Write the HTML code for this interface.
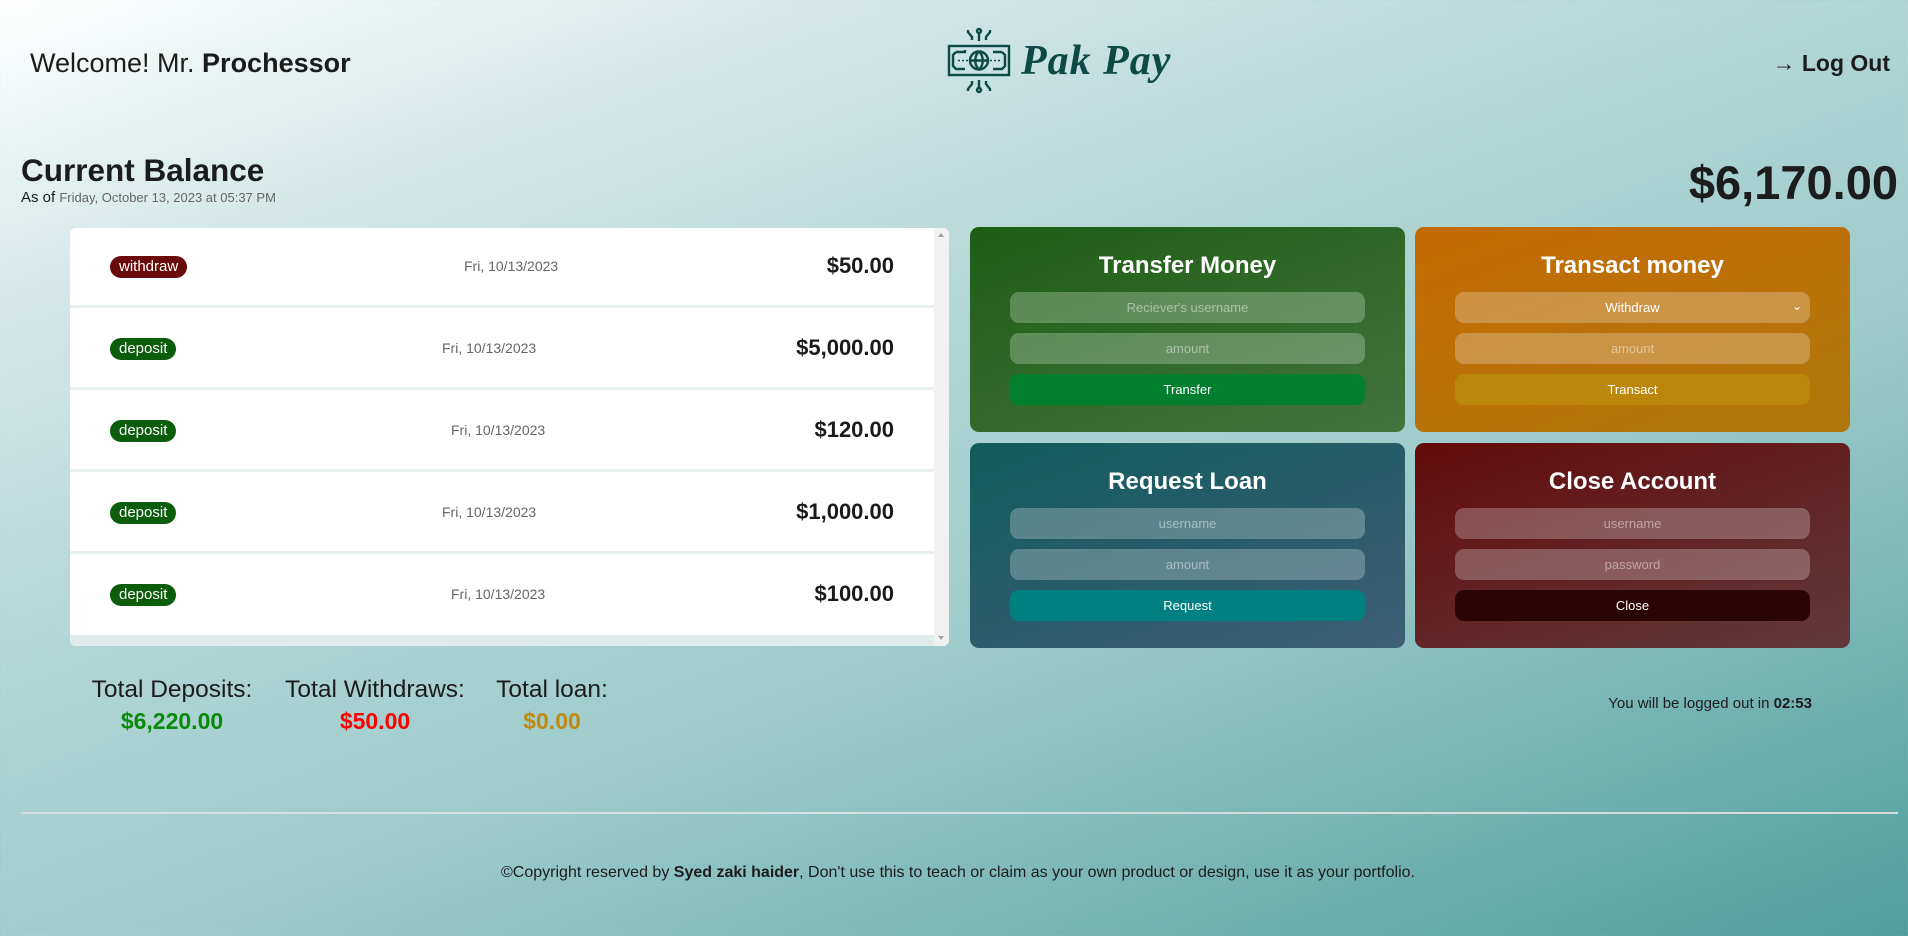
<!DOCTYPE html>
<html><head><meta charset="utf-8">
<style>
*{margin:0;padding:0;box-sizing:border-box}
html,body{width:1908px;height:936px;overflow:hidden}
body{font-family:"Liberation Sans","DejaVu Sans",sans-serif;color:#1c1c1c;position:relative;
background:linear-gradient(160deg,#ffffff 0%,#d6e9e9 18%,#b4d6d6 40%,#9ccaca 62%,#74b3b2 82%,#4e9e9e 100%);}
.a{position:absolute;white-space:nowrap}
.list{position:absolute;left:70px;top:228px;width:879px;height:418px;background:#fff;border-radius:6px;overflow:hidden}
.row{position:absolute;left:0;width:864px;height:80px;border-bottom:3px solid #e6f0f0}
.badge{position:absolute;left:40px;top:28px;height:22px;line-height:22px;padding:0 9px;border-radius:11px;color:#fff;font-size:15px;background:#0b5d0b}
.badge.w{background:#6a0a0a}
.date{position:absolute;top:30px;font-size:14px;color:#666}
.amt{position:absolute;right:40px;top:25px;font-size:22px;font-weight:bold;color:#1a1a1a}
.sb{position:absolute;right:0;top:0;width:15px;height:418px;background:#f1f1f1}
.card{position:absolute;width:435px;height:205px;border-radius:9px;color:#fff;text-align:center}
.card h2{position:absolute;left:0;right:0;top:25px;font-size:24px;font-weight:bold}
.in{position:absolute;left:40px;width:355px;height:31px;border-radius:9px;background:rgba(255,255,255,.25);font-size:13px;line-height:31px;color:rgba(255,255,255,.45)}
.btn{position:absolute;left:40px;width:355px;height:31px;border-radius:9px;font-size:13px;line-height:31px;color:#fff}
</style></head><body>
<div class="a" style="left:30px;top:48px;font-size:27px">Welcome! Mr. <b>Prochessor</b></div>

<svg class="a" style="left:946px;top:27px" width="66" height="68" viewBox="0 0 66 68" fill="none" stroke="#0d4a45" stroke-width="2.4">
<rect x="3" y="19" width="60" height="29"/>
<path d="M10 25 L19 25 L19 23 M10 25 L7 28 L7 39 L10 42 L19 42 M56 25 L47 25 M56 25 L59 28 L59 39 L56 42 L47 42"/>
<circle cx="33" cy="33.5" r="9"/>
<path d="M24 33.5 H42 M33 24.5 C28 29 28 38 33 42.5 C38 38 38 29 33 24.5"/>
<path d="M12 33.5h2M16 33.5h2M20 33.5h2M44 33.5h2M48 33.5h2M52 33.5h2" stroke-width="1.6"/>
<circle cx="33" cy="4" r="2"/><path d="M33 7v7M22 3v2l4 5v3M44 3v2l-4 5v3"/>
<circle cx="33" cy="63" r="2"/><path d="M33 53v7M22 64v-2l4-5v-3M44 64v-2l-4-5v-3"/>
</svg>
<div class="a" style="left:1021px;top:37px;font-size:42px;font-weight:bold;font-style:italic;font-family:'Liberation Serif',serif;color:#0d4a45;letter-spacing:1px">Pak Pay</div>

<div class="a" style="right:18px;top:50px;font-size:23px;font-weight:bold">→ Log Out</div>

<div class="a" style="left:21px;top:152px;font-size:31.5px;font-weight:bold">Current Balance</div>
<div class="a" style="left:21px;top:189px;font-size:15px">As of <span style="font-size:13px;color:#666">Friday, October 13, 2023 at 05:37 PM</span></div>
<div class="a" style="right:10px;top:155px;font-size:47px;font-weight:bold">$6,170.00</div>

<div class="list">
<div class="row" style="top:0"><span class="badge w">withdraw</span><span class="date" style="left:394px">Fri, 10/13/2023</span><span class="amt">$50.00</span></div>
<div class="row" style="top:82px"><span class="badge">deposit</span><span class="date" style="left:372px">Fri, 10/13/2023</span><span class="amt">$5,000.00</span></div>
<div class="row" style="top:164px"><span class="badge">deposit</span><span class="date" style="left:381px">Fri, 10/13/2023</span><span class="amt">$120.00</span></div>
<div class="row" style="top:246px"><span class="badge">deposit</span><span class="date" style="left:372px">Fri, 10/13/2023</span><span class="amt">$1,000.00</span></div>
<div class="row" style="top:328px;border:none"><span class="badge">deposit</span><span class="date" style="left:381px">Fri, 10/13/2023</span><span class="amt">$100.00</span></div>
<div style="position:absolute;left:0;top:407px;width:864px;height:11px;background:#deecec"></div>
<div class="sb"><div style="position:absolute;left:4px;top:5px;border:3px solid transparent;border-bottom:4px solid #a0a0a0;border-top:0"></div><div style="position:absolute;left:4px;bottom:6px;border:3px solid transparent;border-top:4px solid #a0a0a0;border-bottom:0"></div></div>
</div>

<div class="card" style="left:970px;top:227px;background:linear-gradient(160deg,#1d5e13,#43743f)">
<h2>Transfer Money</h2>
<div class="in" style="top:65px">Reciever's username</div>
<div class="in" style="top:106px">amount</div>
<div class="btn" style="top:147px;background:#007f2e">Transfer</div>
</div>
<div class="card" style="left:1415px;top:227px;background:linear-gradient(160deg,#c46a03,#b0780c)">
<h2>Transact money</h2>
<div class="in" style="top:65px;color:#fff">Withdraw<span style="position:absolute;right:8px;top:-1px;font-size:12px">&#8964;</span></div>
<div class="in" style="top:106px">amount</div>
<div class="btn" style="top:147px;background:#bb870a">Transact</div>
</div>
<div class="card" style="left:970px;top:443px;background:linear-gradient(160deg,#115b5e,#3f5e76)">
<h2>Request Loan</h2>
<div class="in" style="top:65px">username</div>
<div class="in" style="top:106px">amount</div>
<div class="btn" style="top:147px;background:#008080">Request</div>
</div>
<div class="card" style="left:1415px;top:443px;background:linear-gradient(160deg,#640b0b,#623a3a)">
<h2>Close Account</h2>
<div class="in" style="top:65px">username</div>
<div class="in" style="top:106px">password</div>
<div class="btn" style="top:147px;background:#2b0505">Close</div>
</div>

<div class="a" style="left:82px;top:676px;font-size:24.5px;text-align:center;width:180px">Total Deposits:<br><b style="color:#0a8a0a;line-height:34px;font-size:23px">$6,220.00</b></div>
<div class="a" style="left:279px;top:676px;font-size:24.5px;text-align:center;width:192px">Total Withdraws:<br><b style="color:#f00;line-height:34px;font-size:23px">$50.00</b></div>
<div class="a" style="left:492px;top:676px;font-size:24.5px;text-align:center;width:120px">Total loan:<br><b style="color:#c08a10;line-height:34px;font-size:23px">$0.00</b></div>
<div class="a" style="right:96px;top:695px;font-size:15px">You will be logged out in <b>02:53</b></div>

<div class="a" style="left:21px;top:812px;width:1877px;height:2px;background:#d4dede"></div>
<div class="a" style="left:0;width:1916px;text-align:center;top:864px;font-size:16px">©Copyright reserved by <b>Syed zaki haider</b>, Don't use this to teach or claim as your own product or design, use it as your portfolio.</div>
</body></html>
